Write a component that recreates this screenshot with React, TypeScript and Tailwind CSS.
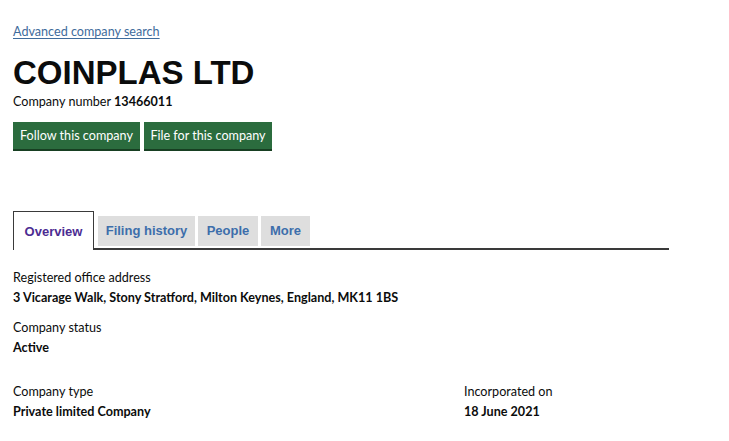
const body = { fontFamily: 'Lato, "Liberation Sans", sans-serif' };

const Field = ({ label, value }: { label: string; value: string }) => (
  <div>
    <div className="text-[12.6px] leading-[20px] text-[#0b0c0c]">{label}</div>
    <div className="text-[12.6px] leading-[20px] font-bold text-[#0b0c0c]">{value}</div>
  </div>
);

const App = () => {
  return (
    <div className="bg-white w-[729px] h-[441px] overflow-hidden px-[13px] pt-[18px]" style={body}>
      <a href="#" className="text-[12.6px] leading-[20px] text-[#3f6c9c] underline underline-offset-2">
        Advanced company search
      </a>
      <h1 className="mt-[12px] text-[33px] leading-[38px] font-bold text-[#0b0c0c] font-['Liberation_Sans',Arial,sans-serif]">
        COINPLAS LTD
      </h1>
      <p className="text-[12.6px] leading-[20px] text-[#0b0c0c]">
        Company number <strong>13466011</strong>
      </p>
      <div className="flex items-start gap-[4px] mt-[10px]">
        <button className="h-[27px] w-[127px] whitespace-nowrap bg-[#2b6c3e] text-white text-[12.6px] leading-[27px] shadow-[0_2px_0_#173f22]">
          Follow this company
        </button>
        <button className="h-[27px] w-[128px] whitespace-nowrap bg-[#2b6c3e] text-white text-[12.6px] leading-[27px] shadow-[0_2px_0_#173f22]">
          File for this company
        </button>
      </div>

      <div className="mt-[62px] w-[656px] flex items-end border-b-2 border-[#3a3a3a] font-['Liberation_Sans',Arial,sans-serif] text-[13px] font-bold">
        <div className="h-[39px] w-[81px] -mb-[2px] bg-white border border-b-0 border-[#3a3a3a] flex items-center justify-center pt-[1px] text-[#4c2c92]">
          Overview
        </div>
        <div className="ml-[4px] mb-[2px] h-[30px] w-[97px] bg-[#dedede] flex items-center justify-center text-[#3d6eab]">
          Filing history
        </div>
        <div className="ml-[3px] mb-[2px] h-[30px] w-[60px] bg-[#dedede] flex items-center justify-center text-[#3d6eab]">
          People
        </div>
        <div className="ml-[3px] mb-[2px] h-[30px] w-[49px] bg-[#dedede] flex items-center justify-center text-[#3d6eab]">
          More
        </div>
      </div>

      <div className="mt-[18px] flex flex-col gap-[10px]">
        <Field label="Registered office address" value="3 Vicarage Walk, Stony Stratford, Milton Keynes, England, MK11 1BS" />
        <Field label="Company status" value="Active" />
      </div>
      <div className="mt-[24px] grid grid-cols-[451px_1fr]">
        <Field label="Company type" value="Private limited Company" />
        <Field label="Incorporated on" value="18 June 2021" />
      </div>
    </div>
  );
};

export default App;
